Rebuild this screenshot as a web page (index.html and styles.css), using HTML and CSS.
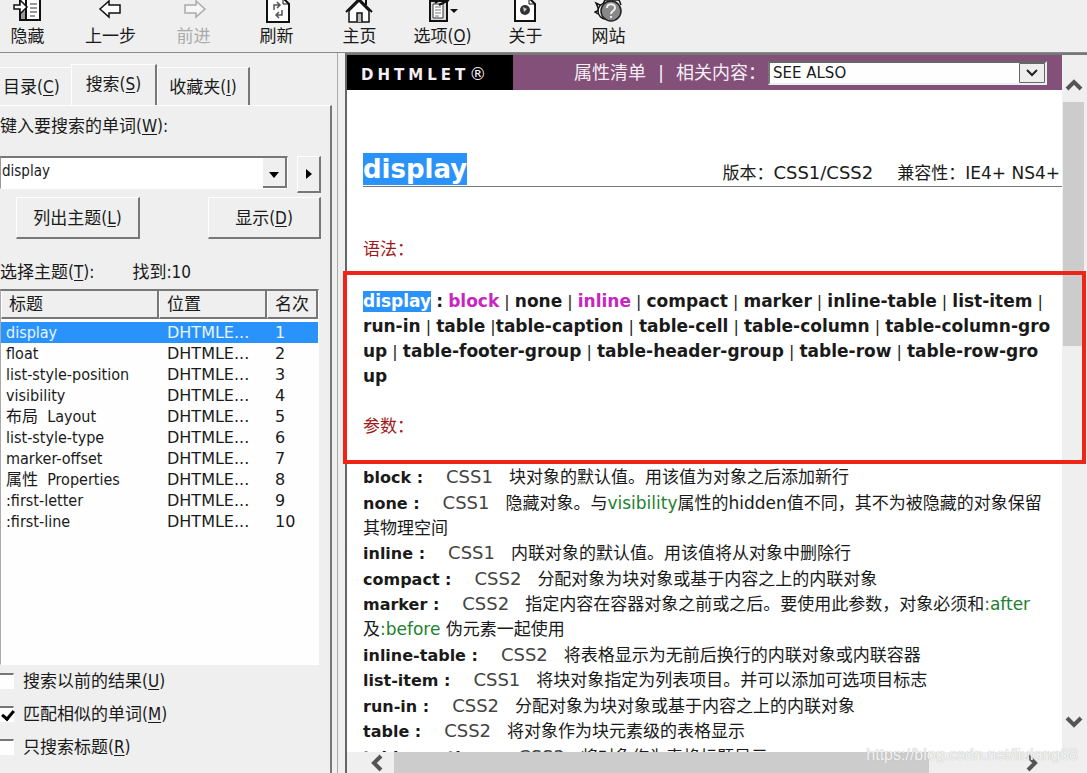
FILE: index.html
```html
<!DOCTYPE html>
<html lang="zh-CN">
<head>
<meta charset="utf-8">
<title>DHTMLET - display</title>
<link rel="stylesheet" href="styles.css">
</head>
<body>
<div class="app">
  <header class="toolbar">
    <button class="tool" type="button">
      <svg class="tool-icon" width="30" height="24" viewBox="0 0 30 24"><path d="M7 0V20H27V0" fill="#fff" stroke="#111" stroke-width="2"/><path d="M8 11h5v8H8z" fill="#999"/><path d="M13 0V20" stroke="#111" stroke-width="2"/><path d="M17 4h7M17 8h7M17 12h7M17 16h5" stroke="#777" stroke-width="1.5"/><path d="M1 5h6V0l7 7-7 7v-5H1z" fill="#fff" stroke="#111" stroke-width="1.5"/></svg>
      <span>隐藏</span>
    </button>
    <button class="tool" type="button">
      <svg class="tool-icon" width="30" height="24" viewBox="0 0 30 24"><path d="M4 9L13 1V5H24V13H13V17Z" fill="#fff" stroke="#111" stroke-width="1.5"/></svg>
      <span>上一步</span>
    </button>
    <button class="tool" type="button" disabled>
      <svg class="tool-icon" width="30" height="24" viewBox="0 0 30 24"><path d="M26 9L17 1V5H6V13H17V17Z" fill="#f6f6f6" stroke="#aaa" stroke-width="1.5"/></svg>
      <span>前进</span>
    </button>
    <button class="tool" type="button">
      <svg class="tool-icon" width="30" height="24" viewBox="0 0 30 24"><path d="M5 -2V22H27V4L21 -2Z" fill="#fff" stroke="#111" stroke-width="2"/><path d="M21 -1V4H27" fill="none" stroke="#111"/><path d="M12 10V5H17M15 2l3 3-3 3M20 10v5H15M17 12l-3 3 3 3" fill="none" stroke="#555" stroke-width="1.5"/></svg>
      <span>刷新</span>
    </button>
    <button class="tool" type="button">
      <svg class="tool-icon" width="30" height="24" viewBox="0 0 30 24"><path d="M4 11V22H24V11L14 1Z" fill="#fff" stroke="#111" stroke-width="1.5"/><path d="M1 12L14 -1L27 12M21 5V0" fill="none" stroke="#111" stroke-width="2"/><path d="M12 22V13H17V22" fill="#bbb" stroke="#111" stroke-width="1.5"/></svg>
      <span>主页</span>
    </button>
    <button class="tool" type="button">
      <svg class="tool-icon" width="30" height="24" viewBox="0 0 30 24"><path d="M2 1H19V21H2Z" fill="#ddd" stroke="#111" stroke-width="2"/><path d="M5 4H15V18H5Z" fill="#fff" stroke="#333"/><path d="M7 7h6M7 10h6M7 13h6M7 16h4" stroke="#777"/><path d="M7 3L15 -2M11 5L21 0" stroke="#111" stroke-width="2"/><path d="M22 9h8l-4 4z" fill="#111"/></svg>
      <span>选项(<u>O</u>)</span>
    </button>
    <button class="tool" type="button">
      <svg class="tool-icon" width="30" height="24" viewBox="0 0 30 24"><path d="M4 -2V21H24V4L18 -2Z" fill="#fff" stroke="#111" stroke-width="2"/><path d="M18 -1V4H24" fill="none" stroke="#111"/><circle cx="14" cy="10" r="5" fill="#333"/><path d="M12 7l4 2-3 3z" fill="#ccc"/></svg>
      <span>关于</span>
    </button>
    <button class="tool" type="button">
      <svg class="tool-icon" width="30" height="24" viewBox="0 0 30 24"><path d="M4 14L1 12l4-2-3-7 6 3 3-6h14l2 5" fill="#eee" stroke="#111" stroke-width="1.5"/><circle cx="12" cy="11" r="8" fill="#fff" stroke="#111" stroke-width="1.5"/><circle cx="17" cy="11" r="10" fill="#888" stroke="#222" stroke-width="1.5"/><path d="M13 8c0-5 8-5 8 0 0 3-4 3-4 6M17 16v2" fill="none" stroke="#eee" stroke-width="2"/></svg>
      <span>网站</span>
    </button>
  </header>

  <div class="workspace">
    <aside class="navigator">
      <nav class="tabs">
        <button class="tab tab-first" type="button">目录(<u>C</u>)</button>
        <button class="tab tab-active" type="button">搜索(<u>S</u>)</button>
        <button class="tab" type="button">收藏夹(<u>I</u>)</button>
      </nav>
      <div class="panel">
        <label class="panel-label" for="keyword">键入要搜索的单词(<u>W</u>):</label>
        <div class="search-row">
          <div class="combo">
            <input class="combo-input" id="keyword" type="text" value="display">
            <button class="combo-button" type="button" aria-label="打开历史"><svg width="12" height="6" viewBox="0 0 12 6"><path d="M1 0h10L6 6z"/></svg></button>
          </div>
          <button class="raised more-button" type="button" aria-label="更多"><svg width="6" height="12" viewBox="0 0 6 12"><path d="M0 1v10l6-5z"/></svg></button>
        </div>
        <div class="action-row">
          <button class="raised action list-action" type="button">列出主题(<u>L</u>)</button>
          <button class="raised action show-action" type="button">显示(<u>D</u>)</button>
        </div>
        <div class="result-caption"><span>选择主题(<u>T</u>):</span><span>找到:10</span></div>
        <div class="results">
          <table class="result-table">
            <colgroup><col class="col-title"><col class="col-place"><col class="col-rank"></colgroup>
            <thead><tr><th>标题</th><th>位置</th><th>名次</th></tr></thead>
            <tbody>
              <tr class="selected"><td>display</td><td>DHTMLE...</td><td>1</td></tr>
              <tr><td>float</td><td>DHTMLE...</td><td>2</td></tr>
              <tr><td>list-style-position</td><td>DHTMLE...</td><td>3</td></tr>
              <tr><td>visibility</td><td>DHTMLE...</td><td>4</td></tr>
              <tr><td>布局 &nbsp;Layout</td><td>DHTMLE...</td><td>5</td></tr>
              <tr><td>list-style-type</td><td>DHTMLE...</td><td>6</td></tr>
              <tr><td>marker-offset</td><td>DHTMLE...</td><td>7</td></tr>
              <tr><td>属性 &nbsp;Properties</td><td>DHTMLE...</td><td>8</td></tr>
              <tr><td>:first-letter</td><td>DHTMLE...</td><td>9</td></tr>
              <tr><td>:first-line</td><td>DHTMLE...</td><td>10</td></tr>
            </tbody>
          </table>
        </div>
        <div class="options">
          <label class="option"><input class="check" type="checkbox"><span>搜索以前的结果(<u>U</u>)</span></label>
          <label class="option"><input class="check" type="checkbox" checked><span>匹配相似的单词(<u>M</u>)</span></label>
          <label class="option"><input class="check" type="checkbox"><span>只搜索标题(<u>R</u>)</span></label>
        </div>
      </div>
    </aside>

    <main class="viewer">
      <div class="page">
        <div class="banner">
          <div class="brand">DHTMLET<span class="brand-mark">®</span></div>
          <div class="banner-links">
            <span class="banner-item">属性清单</span><span class="banner-bar">|</span><label for="related">相关内容：</label>
            <div class="select-box">
              <select class="related" id="related"><option>SEE ALSO</option></select>
              <svg class="select-arrow" width="26" height="20" viewBox="0 0 26 20"><path d="M.5.5h25v19H.5z" fill="#eee" stroke="#666"/><path d="M8 7l5 5 5-5" fill="none" stroke="#222" stroke-width="2"/></svg>
            </div>
          </div>
        </div>
        <article class="article">
          <div class="title-row">
            <h1 class="title"><mark class="hit">display</mark></h1>
            <p class="meta"><span>版本：<span class="version">CSS1/CSS2</span></span><span>兼容性：IE4+ NS4+</span></p>
          </div>
          <h2 class="section-title">语法：</h2>
          <p class="syntax"><mark class="hit">display</mark> <b>:</b> <b class="value">block</b> | <b>none</b> | <b class="value">inline</b> | <b>compact</b> | <b>marker</b> | <b>inline-table</b> | <b>list-item</b> |<br><b>run-in</b> | <b>table</b> |<b>table-caption</b> | <b>table-cell</b> | <b>table-column</b> | <b>table-column-gro</b><br><b>up</b> | <b>table-footer-group</b> | <b>table-header-group</b> | <b>table-row</b> | <b>table-row-gro</b><br><b>up</b></p>
          <h2 class="section-title params-title">参数：</h2>
          <div class="params">
            <p><b>block :</b><span class="level">CSS1</span>块对象的默认值。用该值为对象之后添加新行</p>
            <p><b>none :</b><span class="level">CSS1</span>隐藏对象。与<a class="ref" href="#">visibility</a>属性的hidden值不同，其不为被隐藏的对象保留<br>其物理空间</p>
            <p><b>inline :</b><span class="level">CSS1</span>内联对象的默认值。用该值将从对象中删除行</p>
            <p><b>compact :</b><span class="level">CSS2</span>分配对象为块对象或基于内容之上的内联对象</p>
            <p><b>marker :</b><span class="level">CSS2</span>指定内容在容器对象之前或之后。要使用此参数，对象必须和<a class="ref" href="#">:after</a><br>及<a class="ref" href="#">:before</a> 伪元素一起使用</p>
            <p><b>inline-table :</b><span class="level">CSS2</span>将表格显示为无前后换行的内联对象或内联容器</p>
            <p><b>list-item :</b><span class="level">CSS1</span>将块对象指定为列表项目。并可以添加可选项目标志</p>
            <p><b>run-in :</b><span class="level">CSS2</span>分配对象为块对象或基于内容之上的内联对象</p>
            <p><b>table :</b><span class="level">CSS2</span>将对象作为块元素级的表格显示</p>
            <p><b>table-caption :</b><span class="level">CSS2</span>将对象作为表格标题显示</p>
          </div>
        </article>
      </div>
      <div class="scroll-v">
        <button class="scroll-button" type="button" aria-label="向上"><svg width="18" height="14" viewBox="0 0 18 14"><path d="M2 11l7-7 7 7" fill="none" stroke="#555" stroke-width="4"/></svg></button>
        <div class="track-v"><div class="thumb-v"></div></div>
        <button class="scroll-button" type="button" aria-label="向下"><svg width="18" height="14" viewBox="0 0 18 14"><path d="M2 3l7 7 7-7" fill="none" stroke="#555" stroke-width="4"/></svg></button>
      </div>
      <div class="scroll-h">
        <button class="scroll-button" type="button" aria-label="向左"><svg width="14" height="18" viewBox="0 0 14 18"><path d="M11 2L4 9l7 7" fill="none" stroke="#555" stroke-width="4"/></svg></button>
        <div class="track-h"><div class="thumb-h"></div></div>
        <button class="scroll-button" type="button" aria-label="向右"><svg width="14" height="18" viewBox="0 0 14 18"><path d="M3 2l7 7-7 7" fill="none" stroke="#555" stroke-width="4"/></svg></button>
      </div>
      <div class="highlight-box"></div>
    </main>
  </div>
  <div class="watermark">https://blog.csdn.net/liulang68</div>
</div>
</body>
</html>
```
FILE: styles.css
```css
* { box-sizing: border-box; }

body {
  margin: 0;
  background: #eeefee;
  color: #1a1a1a;
  font: 17px/24px "DejaVu Sans Condensed", "Noto Sans CJK SC", sans-serif;
}

button {
  padding: 0;
  border: 0;
  background: #eeefee;
  color: inherit;
  font: inherit;
}

u { text-underline-offset: 2px; }

.app {
  position: relative;
  display: flex;
  flex-direction: column;
  height: 100vh;
  overflow: hidden;
}

.toolbar {
  display: flex;
  flex: none;
  height: 53px;
  margin-left: -14px;
  border-bottom: 1px solid #8a8a8a;
}

.tool {
  display: flex;
  flex-direction: column;
  align-items: center;
  width: 83px;
  white-space: nowrap;
}

.tool:disabled { color: #aaa; }
.tool-icon { flex: none; }

.workspace {
  display: flex;
  flex: 1;
  min-height: 0;
}

.navigator {
  display: flex;
  flex-direction: column;
  flex: none;
  width: 338px;
  padding: 11px 5px 0 0;
  border-right: 1px solid #aaa;
}

.tabs {
  display: flex;
  align-items: flex-end;
  height: 41px;
}

.tab {
  height: 38px;
  padding: 0 11px;
  border-top: 1px solid #fff;
  border-left: 1px solid #fff;
  border-right: 2px solid #777;
  white-space: nowrap;
}

.tab-first {
  padding-left: 3px;
  border-left: 0;
  border-right: 0;
}

.tab-active {
  height: 41px;
  padding: 0 14px 3px;
}

.panel {
  display: flex;
  flex-direction: column;
  flex: 1;
  min-height: 0;
  padding: 8px 9px 0 0;
  border-top: 1px solid #fff;
  border-right: 2px solid #777;
}

.search-row {
  display: flex;
  gap: 9px;
  margin-top: 18px;
}

.combo {
  display: flex;
  flex: 1;
  height: 33px;
  border: 1px solid #fff;
  border-top: 2px solid #777;
  border-left: 1px solid #999;
  background: #fff;
}

.combo-input {
  flex: 1;
  min-width: 0;
  padding: 0 1px 4px;
  border: 0;
  outline: 0;
  background: #fff;
  color: inherit;
  font: 15px "DejaVu Sans Condensed", sans-serif;
}

.combo-button {
  width: 24px;
  border-right: 2px solid #777;
  border-bottom: 2px solid #777;
}

.raised {
  border: 1px solid #fff;
  border-right: 2px solid #777;
  border-bottom: 2px solid #777;
}

.more-button {
  width: 24px;
  height: 37px;
}

.action-row {
  display: flex;
  justify-content: space-between;
  margin-top: 4px;
  padding-left: 16px;
}

.action { height: 42px; }
.list-action { width: 124px; }
.show-action { width: 113px; }

.result-caption {
  display: flex;
  gap: 38px;
  margin-top: 21px;
}

.results {
  height: 376px;
  margin: 5px 2px 0 0;
  border: 1px solid #fff;
  border-top: 2px solid #777;
  border-left: 1px solid #aaa;
  background: #fefefe;
}

.result-table {
  width: 100%;
  border-collapse: separate;
  border-spacing: 0;
  table-layout: fixed;
}

.col-title { width: 158px; }
.col-place { width: 108px; }

.result-table th {
  height: 28px;
  padding: 0 0 0 7px;
  border-right: 2px solid #777;
  border-bottom: 2px solid #777;
  border-left: 1px solid #fff;
  background: #eeefee;
  font-weight: normal;
  text-align: left;
}

.result-table td {
  height: 21px;
  padding: 0 0 0 8px;
  font: 16px/21px "DejaVu Sans", "Noto Sans CJK SC", sans-serif;
  white-space: nowrap;
}

.result-table td:first-child {
  padding-left: 5px;
  font-family: "DejaVu Sans Condensed", "Noto Sans CJK SC", sans-serif;
}

.result-table tbody::before {
  content: "";
  display: block;
  height: 3px;
}

.selected td {
  background: #2a93fb;
  color: #e8f4ff;
}

.options {
  display: flex;
  flex-direction: column;
  gap: 9px;
  margin-top: 4px;
}

.option {
  display: flex;
  align-items: center;
  gap: 9px;
}

.check {
  width: 16px;
  height: 16px;
  margin: 0 0 0 -2px;
  border: 1px solid #fff;
  border-top: 2px solid #777;
  border-left: 2px solid #777;
  background: #fefefe;
  appearance: none;
}

.check:checked::before {
  content: "";
  display: block;
  width: 5px;
  height: 9px;
  margin: 0 0 0 4px;
  border: solid #000;
  border-width: 0 3px 3px 0;
  transform: rotate(40deg);
}

.viewer {
  position: relative;
  display: grid;
  flex: 1;
  grid-template-columns: 1fr 23px;
  grid-template-rows: 1fr 21px;
  min-width: 0;
  margin-left: 7px;
  padding-right: 2px;
  border-top: 2px solid #777;
  border-left: 2px solid #666;
  font-family: "DejaVu Sans", "Noto Sans CJK SC", sans-serif;
}

.page {
  min-width: 0;
  min-height: 0;
  overflow: hidden;
  background: #fefffe;
}

.banner {
  display: flex;
  height: 35px;
  background: #825078;
  color: #f6eef5;
}

.brand {
  width: 166px;
  padding-left: 14px;
  background: #000;
  font-size: 15px;
  font-weight: bold;
  letter-spacing: 4px;
  line-height: 38px;
  white-space: nowrap;
}

.brand-mark {
  font-size: 17px;
  font-weight: normal;
}

.banner-links {
  display: flex;
  flex: 1;
  align-items: center;
  justify-content: flex-end;
  padding-right: 15px;
  font-size: 18px;
  white-space: nowrap;
}

.banner-bar { margin: 0 12px; }

.select-box {
  position: relative;
  width: 279px;
  margin-left: 2px;
}

.related {
  display: block;
  width: 100%;
  height: 24px;
  padding: 0 3px;
  border: 2px solid #eee;
  border-top-color: #666;
  border-left-color: #777;
  border-radius: 0;
  background: #fefefe;
  color: #1a1a1a;
  font: 15px "DejaVu Sans", sans-serif;
  appearance: none;
}

.select-arrow {
  position: absolute;
  top: 2px;
  right: 2px;
  pointer-events: none;
}

.article { padding: 63px 0 0 16px; }

.title-row {
  display: flex;
  align-items: flex-end;
  justify-content: space-between;
  padding-bottom: 1px;
  border-bottom: 1px solid #777;
}

.title {
  margin: 0;
  font-size: 26px;
  line-height: 32px;
}

.hit {
  display: inline-block;
  background: #2a93fb;
  color: #fff;
  font-weight: bold;
}

.meta {
  display: flex;
  gap: 24px;
  margin: 0;
  padding-right: 2px;
}

.version {
  font-size: 18px;
  line-height: 18px;
}

.section-title {
  margin: 50px 0 0;
  color: #a01818;
  font-size: 17px;
  font-weight: normal;
  line-height: 25px;
}

.syntax {
  margin: 27px 0 0;
  font-size: 16px;
  line-height: 25px;
  white-space: nowrap;
}

.syntax .hit { line-height: 21px; }

.syntax b,
.syntax .hit { font-size: 17px; }

.params b {
  font-size: 16px;
  line-height: 18px;
}

.value { color: #c826c0; }
.params-title { margin-top: 25px; }
.params { margin-top: 26px; }

.params p {
  margin: 0;
  line-height: 25px;
  white-space: nowrap;
}

.params p:nth-child(even) { margin-top: 1px; }

.level {
  margin: 0 16px 0 23px;
  color: #444;
  font-size: 18px;
  line-height: 18px;
}

.ref {
  color: #1e8030;
  text-decoration: none;
}

.scroll-v {
  display: flex;
  flex-direction: column;
  padding: 20px 1px;
}

.scroll-h {
  display: flex;
  grid-column: 1 / 2;
  padding: 0 21px;
}

.scroll-button {
  display: flex;
  align-items: center;
  justify-content: center;
}

.scroll-v .scroll-button { height: 20px; }
.scroll-h .scroll-button { width: 18px; }

.track-v {
  flex: 1;
  padding-top: 7px;
}

.thumb-v {
  height: 40%;
  background: #cbcccb;
}

.track-h {
  flex: 1;
  padding-left: 8px;
}

.thumb-h {
  width: 85%;
  height: 100%;
  background: #cbcccb;
}

.highlight-box {
  position: absolute;
  top: 216px;
  right: 1px;
  left: -4px;
  height: 193px;
  border: 4px solid #ec2517;
  pointer-events: none;
}

.watermark {
  position: absolute;
  right: 9px;
  bottom: 6px;
  color: #f4f4f4;
  font: 16px/24px "Liberation Sans", sans-serif;
  text-shadow: 0 0 1px #aaa;
}
```
